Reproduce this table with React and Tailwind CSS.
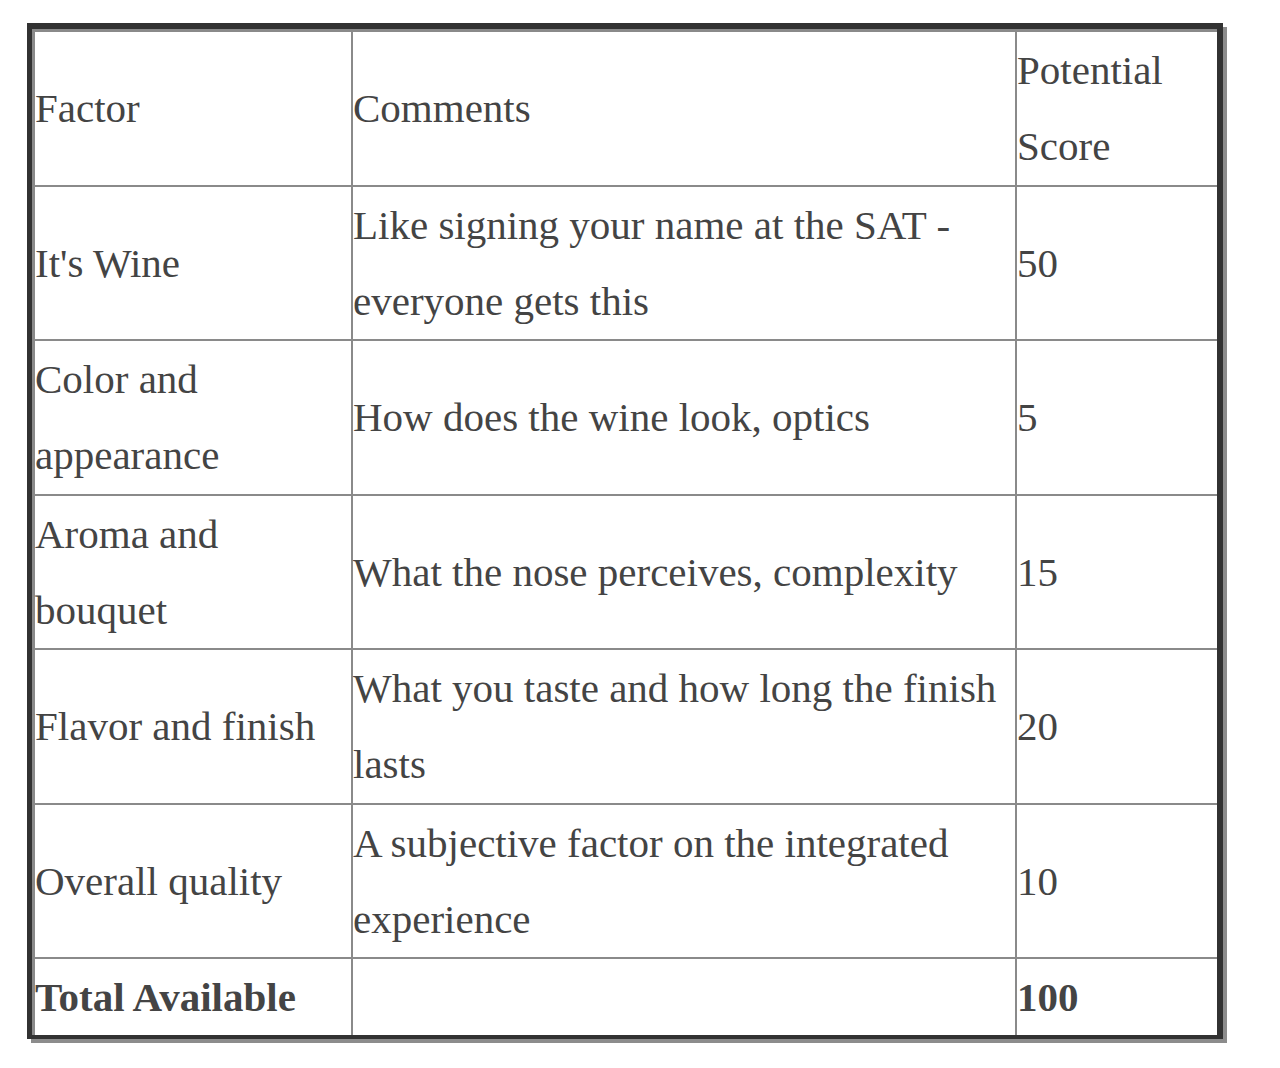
import React from "react";

const rows = [
  { f: ["It's Wine"], c: ["Like signing your name at the SAT -", "everyone gets this"], s: "50" },
  { f: ["Color and", "appearance"], c: ["How does the wine look, optics"], s: "5" },
  { f: ["Aroma and", "bouquet"], c: ["What the nose perceives, complexity"], s: "15" },
  { f: ["Flavor and finish"], c: ["What you taste and how long the finish", "lasts"], s: "20" },
  { f: ["Overall quality"], c: ["A subjective factor on the integrated", "experience"], s: "10" },
];

function Lines({ items }) {
  return items.map((t, i) => (
    <span key={i} className="block whitespace-nowrap">
      {t}
    </span>
  ));
}

export default function App() {
  return (
    <div className="min-h-[1068px] bg-white pt-[23px] pl-[27px]">
      <div className="w-[1196px] border-t-[6px] border-l-[5px] border-r-[6px] border-b-[4px] border-[#323232] shadow-[4px_4px_0_#8c8c8c]">
        <table
          className="w-[1185px] table-fixed border-separate border-spacing-0 text-[41px] leading-[76.25px] text-[#444444]"
          style={{ fontFamily: '"Liberation Serif", "Times New Roman", serif' }}
        >
          <colgroup>
            <col className="w-[319px]" />
            <col className="w-[664px]" />
            <col className="w-[202px]" />
          </colgroup>
          <tbody>
            <tr>
              <td className="border-t-[3px] border-l-[3px] border-[#8a8a8a] p-0 align-middle">Factor</td>
              <td className="border-t-[3px] border-l-2 border-[#8a8a8a] p-0 align-middle">Comments</td>
              <td className="border-t-[3px] border-l-2 border-[#8a8a8a] p-0 align-middle">
                <Lines items={["Potential", "Score"]} />
              </td>
            </tr>
            {rows.map((r, i) => (
              <tr key={i}>
                <td className="h-[154.5px] border-t-2 border-l-[3px] border-[#8a8a8a] p-0 align-middle">
                  <Lines items={r.f} />
                </td>
                <td className="border-t-2 border-l-2 border-[#8a8a8a] p-0 align-middle">
                  <Lines items={r.c} />
                </td>
                <td className="border-t-2 border-l-2 border-[#8a8a8a] p-0 align-middle">{r.s}</td>
              </tr>
            ))}
            <tr>
              <td className="border-t-2 border-l-[3px] border-[#8a8a8a] p-0 align-middle font-bold whitespace-nowrap">
                Total Available
              </td>
              <td className="border-t-2 border-l-2 border-[#8a8a8a] p-0 align-middle"></td>
              <td className="border-t-2 border-l-2 border-[#8a8a8a] p-0 align-middle font-bold">100</td>
            </tr>
          </tbody>
        </table>
      </div>
    </div>
  );
}
